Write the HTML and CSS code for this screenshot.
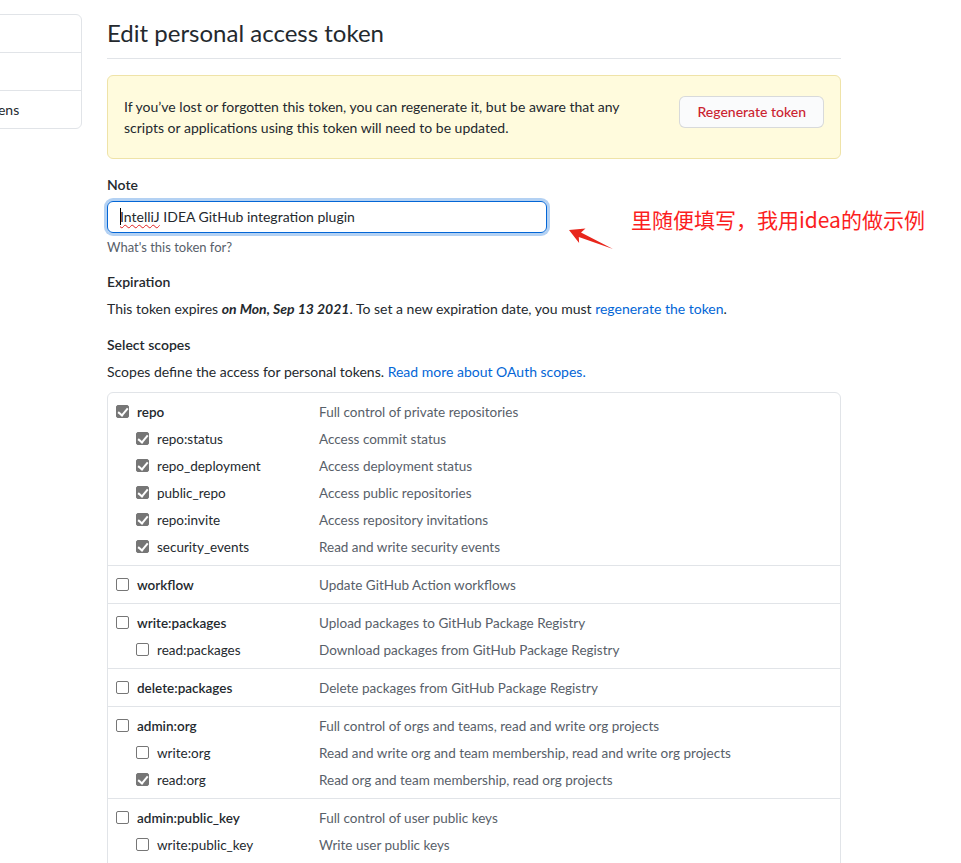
FILE: index.html
```html
<!DOCTYPE html>
<html lang="en">
  <head>
    <meta charset="UTF-8" />
    <meta name="viewport" content="width=device-width, initial-scale=1.0" />
    <title>Edit personal access token</title>
    <link rel="stylesheet" href="styles.css">
  </head>
  <body>
    <div class="layout">
      <nav class="menu">
        <a class="menu-item" href="#">GitHub Apps</a>
        <a class="menu-item" href="#">OAuth Apps</a>
        <a class="menu-item selected" href="#">Personal access tokens</a>
      </nav>

      <main class="content">
        <div class="subhead">
          <h1>Edit personal access token</h1>
        </div>

        <div class="flash">
          <p>
            If you’ve lost or forgotten this token, you can regenerate it, but be aware that any
            scripts or applications using this token will need to be updated.
          </p>
          <button type="button" class="btn-danger">Regenerate token</button>
        </div>

        <div class="form-group note-group">
          <label class="form-label">Note</label>
          <div class="note-field">
            <div class="text-input"><span class="caret"></span><span class="misspelled">IntelliJ</span> IDEA GitHub integration plugin</div>
            <svg class="annotation-arrow" width="52" height="28" viewBox="0 0 52 28">
              <polygon points="4,5 20.5,3.4 16,7.6 48,24 13.8,12 14.1,18.1" fill="#e8261c" />
            </svg>
            <span class="annotation-text">里随便填写，我用idea的做示例</span>
          </div>
          <p class="note">What's this token for?</p>
        </div>

        <div class="form-group">
          <h3 class="form-label">Expiration</h3>
          <p class="form-text">
            This token expires <strong><em>on Mon, Sep 13 2021</em></strong>. To set a new expiration date, you must
            <a href="#">regenerate the token</a>.
          </p>
        </div>

        <div class="form-group">
          <h3 class="form-label">Select scopes</h3>
          <p class="form-text">
            Scopes define the access for personal tokens. <a href="#">Read more about OAuth scopes.</a>
          </p>
        </div>

        <div class="scopes">
          <div class="scope-group">
            <label class="scope-row"><input type="checkbox" checked /><span class="scope-name">repo</span><span class="scope-desc">Full control of private repositories</span></label>
            <label class="scope-row child"><input type="checkbox" checked /><span class="scope-name">repo:status</span><span class="scope-desc">Access commit status</span></label>
            <label class="scope-row child"><input type="checkbox" checked /><span class="scope-name">repo_deployment</span><span class="scope-desc">Access deployment status</span></label>
            <label class="scope-row child"><input type="checkbox" checked /><span class="scope-name">public_repo</span><span class="scope-desc">Access public repositories</span></label>
            <label class="scope-row child"><input type="checkbox" checked /><span class="scope-name">repo:invite</span><span class="scope-desc">Access repository invitations</span></label>
            <label class="scope-row child"><input type="checkbox" checked /><span class="scope-name">security_events</span><span class="scope-desc">Read and write security events</span></label>
          </div>
          <div class="scope-group">
            <label class="scope-row"><input type="checkbox" /><span class="scope-name">workflow</span><span class="scope-desc">Update GitHub Action workflows</span></label>
          </div>
          <div class="scope-group">
            <label class="scope-row"><input type="checkbox" /><span class="scope-name">write:packages</span><span class="scope-desc">Upload packages to GitHub Package Registry</span></label>
            <label class="scope-row child"><input type="checkbox" /><span class="scope-name">read:packages</span><span class="scope-desc">Download packages from GitHub Package Registry</span></label>
          </div>
          <div class="scope-group">
            <label class="scope-row"><input type="checkbox" /><span class="scope-name">delete:packages</span><span class="scope-desc">Delete packages from GitHub Package Registry</span></label>
          </div>
          <div class="scope-group">
            <label class="scope-row"><input type="checkbox" /><span class="scope-name">admin:org</span><span class="scope-desc">Full control of orgs and teams, read and write org projects</span></label>
            <label class="scope-row child"><input type="checkbox" /><span class="scope-name">write:org</span><span class="scope-desc">Read and write org and team membership, read and write org projects</span></label>
            <label class="scope-row child"><input type="checkbox" checked /><span class="scope-name">read:org</span><span class="scope-desc">Read org and team membership, read org projects</span></label>
          </div>
          <div class="scope-group">
            <label class="scope-row"><input type="checkbox" /><span class="scope-name">admin:public_key</span><span class="scope-desc">Full control of user public keys</span></label>
            <label class="scope-row child"><input type="checkbox" /><span class="scope-name">write:public_key</span><span class="scope-desc">Write user public keys</span></label>
            <label class="scope-row child"><input type="checkbox" /><span class="scope-name">read:public_key</span><span class="scope-desc">Read user public keys</span></label>
          </div>
        </div>
      </main>
    </div>
  </body>
</html>
```

FILE: styles.css
```css
* {
  box-sizing: border-box;
}
html,
body {
  overflow: hidden;
}
body {
  margin: 0;
  font-family: Lato, "Noto Sans", sans-serif;
  font-size: 14px;
  line-height: 1.5;
  color: #24292e;
  background-color: #fff;
}
a {
  color: #0366d6;
  text-decoration: none;
}
.layout {
  display: flex;
  align-items: flex-start;
  gap: 25px;
  padding-top: 14px;
}
.menu {
  flex: none;
  width: 220px;
  margin-left: -138px;
  border: 1px solid #e1e4e8;
  border-radius: 6px;
}
.menu-item {
  display: block;
  padding: 8px 16px;
  line-height: 21px;
  color: #24292e;
  white-space: nowrap;
  border-top: 1px solid #e1e4e8;
}
.menu-item:first-child {
  border-top: 0;
}
.content {
  flex: none;
  width: 734px;
}
.subhead {
  padding-top: 4px;
  padding-bottom: 10px;
  border-bottom: 1px solid #e1e4e8;
}
.subhead h1 {
  margin: 0;
  font-size: 24px;
  font-weight: 400;
  line-height: 30px;
}
.flash {
  display: flex;
  align-items: flex-start;
  gap: 24px;
  margin-top: 16px;
  padding: 20px 16px;
  background-color: #fffbdd;
  border: 1px solid #efe3a8;
  border-radius: 6px;
}
.flash p {
  flex: 1;
  margin: 0;
  line-height: 21px;
}
.btn-danger {
  flex: none;
  padding: 5px 17px;
  font-family: inherit;
  font-size: 14px;
  font-weight: 500;
  line-height: 20px;
  color: #cb2431;
  background-color: #fafbfc;
  border: 1px solid rgba(27, 31, 35, 0.15);
  border-radius: 6px;
}
.form-group {
  margin-top: 15px;
}
.form-label {
  display: block;
  margin: 0;
  font-size: 14px;
  font-weight: 600;
  line-height: 21px;
}
.form-text {
  margin: 6px 0 0;
  line-height: 21px;
}
.note-field {
  position: relative;
  margin-top: 6px;
}
.text-input {
  width: 440px;
  height: 32px;
  padding: 5px 12px;
  line-height: 20px;
  border: 1px solid #0366d6;
  border-radius: 6px;
  box-shadow: 0 0 0 3px rgba(3, 102, 214, 0.3);
  white-space: nowrap;
}
.caret {
  display: inline-block;
  width: 1px;
  height: 17px;
  margin-right: -1px;
  vertical-align: -3px;
  background-color: #000;
}
.misspelled {
  text-decoration: underline wavy #e02020;
  text-decoration-thickness: 1px;
  text-underline-offset: 2px;
}
.annotation-arrow {
  position: absolute;
  left: 458px;
  top: 24px;
}
.annotation-text {
  position: absolute;
  left: 524px;
  top: 3px;
  font-family: "Noto Sans CJK SC", sans-serif;
  font-size: 21px;
  line-height: 30px;
  color: #fb1e1e;
  white-space: nowrap;
}
.note {
  margin: 5px 0 0;
  font-size: 13px;
  line-height: 18px;
  color: #586069;
}
.scopes {
  margin-top: 10px;
  font-size: 13.5px;
  border: 1px solid #e1e4e8;
  border-radius: 6px;
}
.scope-group {
  padding: 5px 8px;
  border-top: 1px solid #e1e4e8;
}
.scope-group:first-child {
  border-top: 0;
}
.scope-row {
  display: flex;
  align-items: center;
  height: 27px;
}
.scope-row input {
  appearance: none;
  flex: none;
  position: relative;
  width: 13px;
  height: 13px;
  margin: 0 8px 0 0;
  background-color: #fff;
  border: 1px solid #767676;
  border-radius: 2px;
}
.scope-row input:checked {
  background-color: #767676;
}
.scope-row input:checked::before {
  content: "";
  position: absolute;
  left: 3px;
  top: 0px;
  width: 4px;
  height: 8px;
  border-right: 2px solid #fff;
  border-bottom: 2px solid #fff;
  transform: rotate(40deg);
}
.scope-name,
.scope-desc {
  padding-top: 2px;
}
.scope-name {
  flex: none;
  width: 182px;
  font-weight: 600;
}
.child {
  padding-left: 20px;
}
.child .scope-name {
  width: 162px;
  font-weight: 400;
}
.scope-desc {
  color: #586069;
  white-space: nowrap;
}
```
